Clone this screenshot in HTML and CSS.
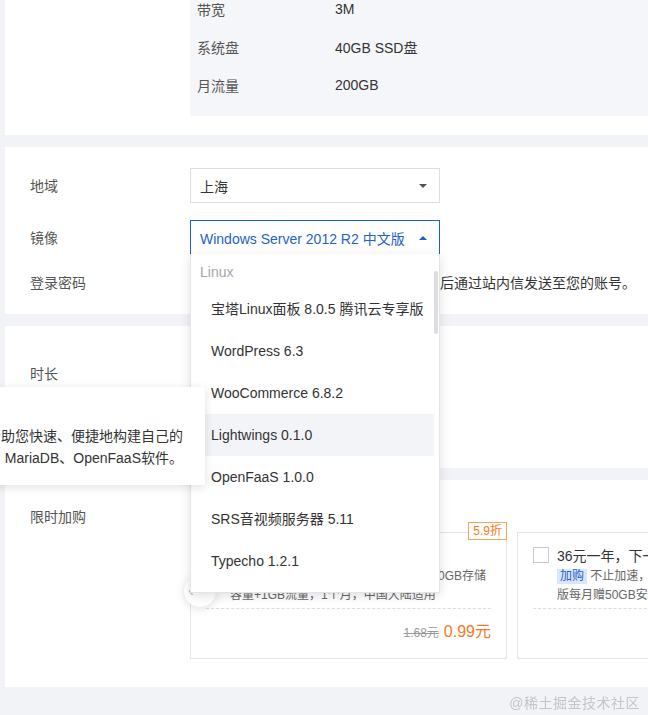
FILE: index.html
```html
<!DOCTYPE html>
<html lang="zh-CN">
<head>
<meta charset="utf-8">
<title>购买配置</title>
<link rel="stylesheet" href="styles.css">
</head>
<body>
<div class="page">

  <section class="section sec-spec">
    <div class="row">
      <div class="label"></div>
      <div class="spec-box">
        <div class="spec-row"><span class="spec-key">CPU</span><span>2核</span></div>
        <div class="spec-row"><span class="spec-key">内存</span><span>2GB</span></div>
        <div class="spec-row"><span class="spec-key">带宽</span><span>3M</span></div>
        <div class="spec-row"><span class="spec-key">系统盘</span><span>40GB SSD盘</span></div>
        <div class="spec-row"><span class="spec-key">月流量</span><span>200GB</span></div>
      </div>
    </div>
  </section>

  <section class="section sec-form">
    <div class="row form-row">
      <div class="label">地域</div>
      <div class="select">
        <span>上海</span>
        <span class="caret caret-down"></span>
      </div>
    </div>
    <div class="row form-row">
      <div class="label">镜像</div>
      <div class="select select-open">
        <span>Windows Server 2012 R2 中文版</span>
        <span class="caret caret-up"></span>
        <div class="dropdown">
          <div class="dd-group">Linux</div>
          <div class="dd-item">宝塔Linux面板 8.0.5 腾讯云专享版</div>
          <div class="dd-item">WordPress 6.3</div>
          <div class="dd-item">WooCommerce 6.8.2</div>
          <div class="dd-item dd-hover">Lightwings 0.1.0</div>
          <div class="dd-item">OpenFaaS 1.0.0</div>
          <div class="dd-item">SRS音视频服务器 5.11</div>
          <div class="dd-item">Typecho 1.2.1</div>
          <div class="dd-scroll"></div>
        </div>
      </div>
    </div>
    <div class="row pwd-row">
      <div class="label">登录密码</div>
      <div class="pwd-text">系统随机生成密码，并在实例创建成功后通过站内信发送至您的账号。</div>
    </div>
  </section>

  <section class="section sec-duration">
    <div class="row">
      <div class="label">时长</div>
    </div>
    <div class="tooltip">
      <p class="tip-line">应用镜像可以帮助您快速、便捷地构建自己的</p>
      <p class="tip-line">MariaDB、OpenFaaS软件。</p>
    </div>
  </section>

  <section class="section sec-addon">
    <div class="row addon-row">
      <div class="label">限时加购</div>
      <div class="cards">
        <div class="card">
          <span class="badge">5.9折</span>
          <div class="card-head">
            <span class="checkbox"></span>
            <span class="card-title">对象存储资源包</span>
          </div>
          <div class="card-desc">
            <span class="tag">加购</span> 不止加速，还每月赠送对象存储50GB存储<br>容量+1GB流量，1个月，中国大陆适用
          </div>
          <div class="card-price">
            <span class="old-price">1.68元</span>
            <span class="new-price">0.99元</span>
          </div>
        </div>
        <div class="card">
          <div class="card-head">
            <span class="checkbox"></span>
            <span class="card-title">36元一年，下一年续费同价</span>
          </div>
          <div class="card-desc">
            <span class="tag">加购</span> 不止加速，EdgeOne个人<br>版每月赠50GB安全加速流量
          </div>
          <div class="card-price">
            <span class="old-price">72元</span>
            <span class="new-price">36元</span>
          </div>
        </div>
      </div>
    </div>
    <div class="nav-btn">‹</div>
  </section>

</div>
<div class="watermark">@稀土掘金技术社区</div>
</body>
</html>
```

FILE: styles.css
```css
html, body {
  overflow: hidden;
}

body {
  margin: 0;
  background: #f2f3f6;
  font-family: "Liberation Sans", "Noto Sans CJK SC", sans-serif;
  font-size: 14px;
  color: #333;
}

.page {
  margin-top: -118px;
  padding-left: 5px;
}

.section {
  position: relative;
  background: #fff;
  padding-left: 25px;
  margin-bottom: 12px;
}

.row {
  display: flex;
  align-items: center;
}

.label {
  width: 160px;
  flex: none;
  color: #555;
  line-height: 22px;
}

/* spec */
.sec-spec {
  padding-top: 20px;
  padding-bottom: 19px;
}

.spec-box {
  flex: 1;
  background: #f5f6f9;
  padding: 12px 0 12px 7px;
}

.spec-row {
  display: flex;
  align-items: center;
  height: 38px;
  color: #333;
}

.spec-key {
  width: 138px;
  color: #555;
}

/* form */
.sec-form {
  padding-top: 21px;
  padding-bottom: 20px;
}

.form-row {
  margin-bottom: 17px;
}

.select {
  position: relative;
  box-sizing: border-box;
  width: 250px;
  height: 35px;
  border: 1px solid #dcdde1;
  padding: 0 9px;
  display: flex;
  align-items: center;
  justify-content: space-between;
  background: #fff;
}

.select-open {
  border-color: #1c5fd4;
  color: #2461c9;
}

.caret {
  width: 0;
  height: 0;
  margin-right: 3px;
  border-left: 4px solid transparent;
  border-right: 4px solid transparent;
}

.caret-down {
  border-top: 4px solid #555;
}

.caret-up {
  border-bottom: 4px solid #1c5fd4;
}

.dropdown {
  position: absolute;
  z-index: 10;
  top: 100%;
  left: -1px;
  box-sizing: border-box;
  width: 250px;
  height: 339px;
  padding-top: 2px;
  background: #fff;
  border: 1px solid #e3e4e8;
  border-top: none;
  box-shadow: 0 3px 10px rgba(0, 0, 0, 0.12);
  color: #333;
}

.dd-group {
  height: 32px;
  line-height: 32px;
  padding-left: 9px;
  color: #a3a5ab;
}

.dd-item {
  height: 42px;
  line-height: 42px;
  padding-left: 20px;
  margin-right: 5px;
  white-space: nowrap;
}

.dd-hover {
  background: #f3f4f7;
}

.dd-scroll {
  position: absolute;
  top: 17px;
  right: 1px;
  width: 4px;
  height: 63px;
  border-radius: 2px;
  background: #dcdde1;
}

.pwd-text {
  line-height: 22px;
  white-space: nowrap;
  padding-left: 12px;
  color: #333;
}

/* duration */
.sec-duration {
  box-sizing: border-box;
  height: 142px;
  padding-top: 37px;
}

.tooltip {
  position: absolute;
  z-index: 20;
  top: 61px;
  left: -65px;
  box-sizing: border-box;
  width: 265px;
  height: 98px;
  padding: 38px 22px 0 0;
  background: #fff;
  border-radius: 2px;
  box-shadow: 0 2px 10px rgba(0, 0, 0, 0.13);
  display: flex;
  flex-direction: column;
  align-items: flex-end;
}

.tip-line {
  margin: 0;
  line-height: 22px;
  white-space: nowrap;
  color: #333;
}

/* addon */
.sec-addon {
  box-sizing: border-box;
  height: 207px;
  padding-top: 26px;
  margin-bottom: 0;
}

.addon-row {
  align-items: flex-start;
}

.cards {
  display: flex;
  gap: 10px;
  padding-top: 26px;
}

.card {
  position: relative;
  box-sizing: border-box;
  flex: none;
  width: 317px;
  height: 127px;
  border: 1px solid #e3e4e8;
  padding: 14px 15px 0 15px;
  background: #fff;
}

.badge {
  position: absolute;
  top: -11px;
  right: -1px;
  height: 16px;
  line-height: 16px;
  padding: 0 4px;
  border: 1px solid #f7a35c;
  background: #fff;
  color: #f57a23;
  font-size: 12px;
}

.card-head {
  display: flex;
  align-items: center;
  gap: 8px;
  height: 16px;
}

.checkbox {
  box-sizing: border-box;
  width: 16px;
  height: 16px;
  border: 1px solid #c8cacf;
  background: #fff;
  flex: none;
}

.card-title {
  white-space: nowrap;
  color: #333;
}

.card-desc {
  margin-top: 4px;
  padding-left: 24px;
  font-size: 12px;
  line-height: 19px;
  color: #666;
  white-space: nowrap;
  padding-bottom: 3px;
  border-bottom: 1px dashed #dcdde1;
}

.tag {
  display: inline-block;
  line-height: 15px;
  padding: 0 3px;
  background: #dae6fb;
  color: #2461c9;
}

.card-price {
  display: flex;
  align-items: baseline;
  justify-content: flex-end;
  gap: 5px;
  padding-top: 11px;
  line-height: 24px;
}

.old-price {
  font-size: 12px;
  color: #999;
  text-decoration: line-through;
}

.new-price {
  font-size: 16px;
  color: #f57a23;
}

.nav-btn {
  position: absolute;
  z-index: 1;
  left: 179px;
  top: 95px;
  width: 32px;
  height: 32px;
  border-radius: 50%;
  background: #fff;
  box-shadow: 0 2px 8px rgba(0, 0, 0, 0.12);
  color: #c0c2c8;
  font-size: 18px;
  line-height: 30px;
  text-indent: 4px;
}

.watermark {
  position: fixed;
  right: 8px;
  bottom: 3px;
  font-size: 14px;
  color: #c3c5cb;
  letter-spacing: 0.5px;
}
```
